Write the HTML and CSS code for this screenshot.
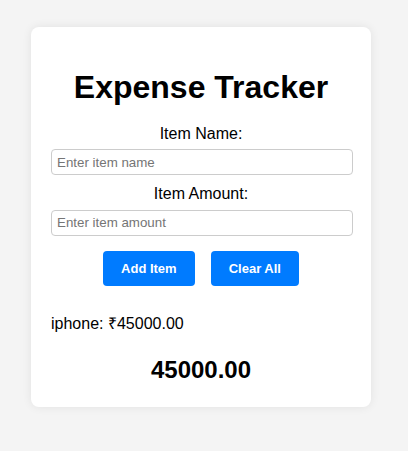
FILE: index.html
```html
<!DOCTYPE html>
<html lang="en">
<head>
<meta charset="UTF-8">
<title>Expense Tracker</title>
<link rel="stylesheet" href="styles.css">
</head>
<body>
<div class="container">
  <h1 class="title">Expense Tracker</h1>
  <label class="label" for="name">Item Name:</label>
  <input class="field" id="name" type="text" placeholder="Enter item name">
  <label class="label" for="amount">Item Amount:</label>
  <input class="field" id="amount" type="number" placeholder="Enter item amount">
  <div class="actions">
    <button class="btn" type="button">Add Item</button>
    <button class="btn" type="button">Clear All</button>
  </div>
  <ul class="list">
    <li class="item">iphone: ₹45000.00</li>
  </ul>
  <h2 class="total">45000.00</h2>
</div>
</body>
</html>
```

FILE: styles.css
```css
html, body {
  margin: 0;
  padding: 0;
  background: #f4f4f4;
  font-family: "Liberation Sans", Arial, sans-serif;
  color: #000;
}

body {
  padding: 27px 0 44px 31px;
}

.container {
  width: 300px;
  padding: 20px;
  background: #fff;
  border-radius: 8px;
  box-shadow: 0 0 10px rgba(0, 0, 0, 0.08);
  text-align: center;
}

.title {
  font-size: 32px;
  font-weight: bold;
  margin: 22px 0 19px;
  line-height: 36.8px;
}

.label {
  display: block;
  font-size: 16px;
  line-height: 18.4px;
  margin-bottom: 6px;
}

.field {
  display: block;
  box-sizing: border-box;
  width: calc(100% + 2px);
  height: 26px;
  margin: 0 0 10px;
  padding: 0 5px;
  border: 1px solid #ccc;
  border-radius: 4px;
  font-family: "Liberation Sans", Arial, sans-serif;
  font-size: 13.33px;
  color: #000;
  background: #fff;
  -moz-appearance: textfield;
}

.field::placeholder {
  color: #757575;
}

.field::-webkit-outer-spin-button,
.field::-webkit-inner-spin-button {
  -webkit-appearance: none;
  margin: 0;
}

.actions {
  display: flex;
  justify-content: center;
  gap: 16px;
  margin-top: 15px;
}

.btn {
  background: #007bff;
  color: #fff;
  border: none;
  border-radius: 4px;
  padding: 10px 18px;
  font-family: "Liberation Sans", Arial, sans-serif;
  font-size: 13px;
  font-weight: bold;
  line-height: 15px;
  cursor: pointer;
}

.list {
  list-style: none;
  margin: 29px 0 0;
  padding: 0;
  text-align: left;
}

.item {
  font-size: 16px;
  line-height: 18.4px;
}

.total {
  font-size: 24px;
  font-weight: bold;
  line-height: 27.6px;
  margin: 23px 0 3px;
}
```
